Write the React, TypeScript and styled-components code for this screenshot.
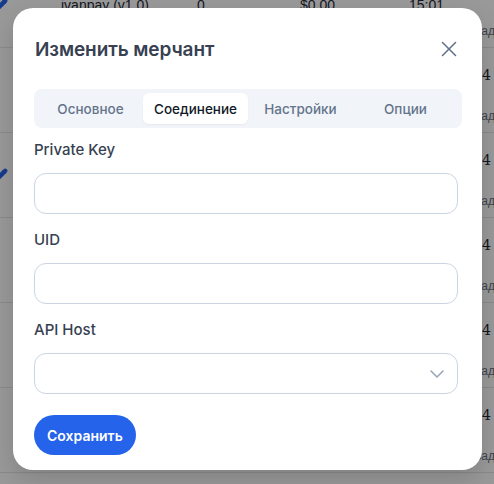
import styled, { createGlobalStyle } from "styled-components";
import { ChevronDown, X, Pencil } from "lucide-react";

const GlobalStyle = createGlobalStyle`
  html, body {
    margin: 0;
    padding: 0;
    background: #ffffff;
    overflow: hidden;
  }
  * {
    box-sizing: border-box;
  }
`;

const Page = styled.div`
  position: relative;
  width: 494px;
  height: 484px;
  overflow: hidden;
  font-family: "Liberation Sans", Arial, sans-serif;
`;

const Table = styled.div`
  margin-top: -37px;
  width: 560px;
`;

const Row = styled.div`
  display: grid;
  grid-template-columns: 61px 136px 103px 109px 40px 42px;
  align-items: center;
  height: 85px;
  border-bottom: 1px solid #e5e7eb;
  font-size: 14px;
  color: #1f2937;
  white-space: nowrap;
`;

const EditCell = styled.div`
  display: flex;
  align-items: center;
  margin-left: -6px;
  color: #2563eb;
`;

const DateCell = styled.div`
  display: flex;
  flex-direction: column;
  align-items: flex-end;
  gap: 26px;
  margin-top: 9px;
  font-family: "DejaVu Serif", serif;
  font-size: 14px;
`;

const Muted = styled.span`
  margin-right: -4px;
  font-family: "Liberation Sans", Arial, sans-serif;
  font-size: 12px;
  color: #6b7280;
`;

const Overlay = styled.div`
  position: absolute;
  inset: 0;
  background: rgba(0, 0, 0, 0.4);
`;

const Modal = styled.div`
  position: absolute;
  left: 13px;
  top: 8px;
  width: 469px;
  height: 462px;
  background: #ffffff;
  border-radius: 20px;
  box-shadow: 0 10px 25px rgba(0, 0, 0, 0.15);
  padding: 26px 24px 0 21px;
  font-family: Inter, "Noto Sans", sans-serif;
`;

const Header = styled.div`
  display: flex;
  align-items: center;
  justify-content: space-between;
  height: 30px;
  padding-left: 1px;
`;

const Title = styled.h2`
  margin: 0;
  font-size: 19px;
  font-weight: 600;
  color: #374151;
  letter-spacing: -0.1px;
`;

const CloseButton = styled.button`
  display: flex;
  align-items: center;
  justify-content: center;
  width: 26px;
  height: 26px;
  margin-right: -4px;
  padding: 0;
  border: none;
  background: none;
  color: #64748b;
  cursor: pointer;
`;

const Tabs = styled.div`
  display: grid;
  grid-template-columns: repeat(4, 1fr);
  margin: 25px -4px 0 0;
  padding: 4px;
  background: #f1f5f9;
  border-radius: 8px;
`;

const Tab = styled.button<{ $active?: boolean }>`
  height: 31px;
  border: none;
  border-radius: 6px;
  background: ${(p) => (p.$active ? "#ffffff" : "transparent")};
  color: ${(p) => (p.$active ? "#111827" : "#64748b")};
  font-family: inherit;
  font-size: 13.5px;
  font-weight: 500;
  cursor: pointer;
  box-shadow: ${(p) => (p.$active ? "0 1px 2px rgba(0,0,0,0.05)" : "none")};
`;

const Form = styled.div`
  display: flex;
  flex-direction: column;
  margin-top: 12px;
`;

const Field = styled.div`
  display: flex;
  flex-direction: column;
  margin-bottom: 16px;
`;

const Label = styled.label`
  height: 20px;
  line-height: 20px;
  margin-bottom: 13px;
  font-size: 15px;
  font-weight: 500;
  color: #374151;
`;

const Input = styled.input`
  height: 41px;
  width: 100%;
  padding: 0 14px;
  border: 1px solid #cbd5e1;
  border-radius: 12px;
  background: #ffffff;
  font-family: inherit;
  font-size: 14px;
  outline: none;
`;

const SelectBox = styled.div`
  display: flex;
  align-items: center;
  justify-content: flex-end;
  height: 41px;
  padding-right: 8px;
  border: 1px solid #cbd5e1;
  border-radius: 12px;
  color: #94a3b8;
`;

const SaveButton = styled.button`
  align-self: flex-start;
  height: 40px;
  margin-top: 5px;
  padding: 0 13px;
  border: none;
  border-radius: 9999px;
  background: #2563eb;
  color: #ffffff;
  font-family: inherit;
  font-size: 14px;
  font-weight: 600;
  cursor: pointer;
`;

const rows = [
  { name: "ivanpay (v1.0)", count: "0", amount: "$0.00", time: "15:01", edit: true },
  { name: "", count: "", amount: "", time: "", edit: false },
  { name: "", count: "", amount: "", time: "", edit: true },
  { name: "", count: "", amount: "", time: "", edit: false },
  { name: "", count: "", amount: "", time: "", edit: false },
  { name: "", count: "", amount: "", time: "", edit: false },
];

const tabs = ["Основное", "Соединение", "Настройки", "Опции"];

export default function App() {
  return (
    <>
      <GlobalStyle />
      <Page>
        <Table>
          {rows.map((r, i) => (
            <Row key={i}>
              <EditCell>{r.edit && <Pencil size={14} fill="#2563eb" />}</EditCell>
              <span>{r.name}</span>
              <span>{r.count}</span>
              <span>{r.amount}</span>
              <span>{r.time}</span>
              <DateCell>
                <span>2024</span>
                <Muted>назад</Muted>
              </DateCell>
            </Row>
          ))}
        </Table>
        <Overlay />
        <Modal>
          <Header>
            <Title>Изменить мерчант</Title>
            <CloseButton aria-label="Закрыть">
              <X size={26} strokeWidth={1.5} />
            </CloseButton>
          </Header>
          <Tabs>
            {tabs.map((t) => (
              <Tab key={t} $active={t === "Соединение"}>
                {t}
              </Tab>
            ))}
          </Tabs>
          <Form>
            <Field>
              <Label>Private Key</Label>
              <Input />
            </Field>
            <Field>
              <Label>UID</Label>
              <Input />
            </Field>
            <Field>
              <Label>API Host</Label>
              <SelectBox>
                <ChevronDown size={24} strokeWidth={1.5} />
              </SelectBox>
            </Field>
            <SaveButton>Сохранить</SaveButton>
          </Form>
        </Modal>
      </Page>
    </>
  );
}
